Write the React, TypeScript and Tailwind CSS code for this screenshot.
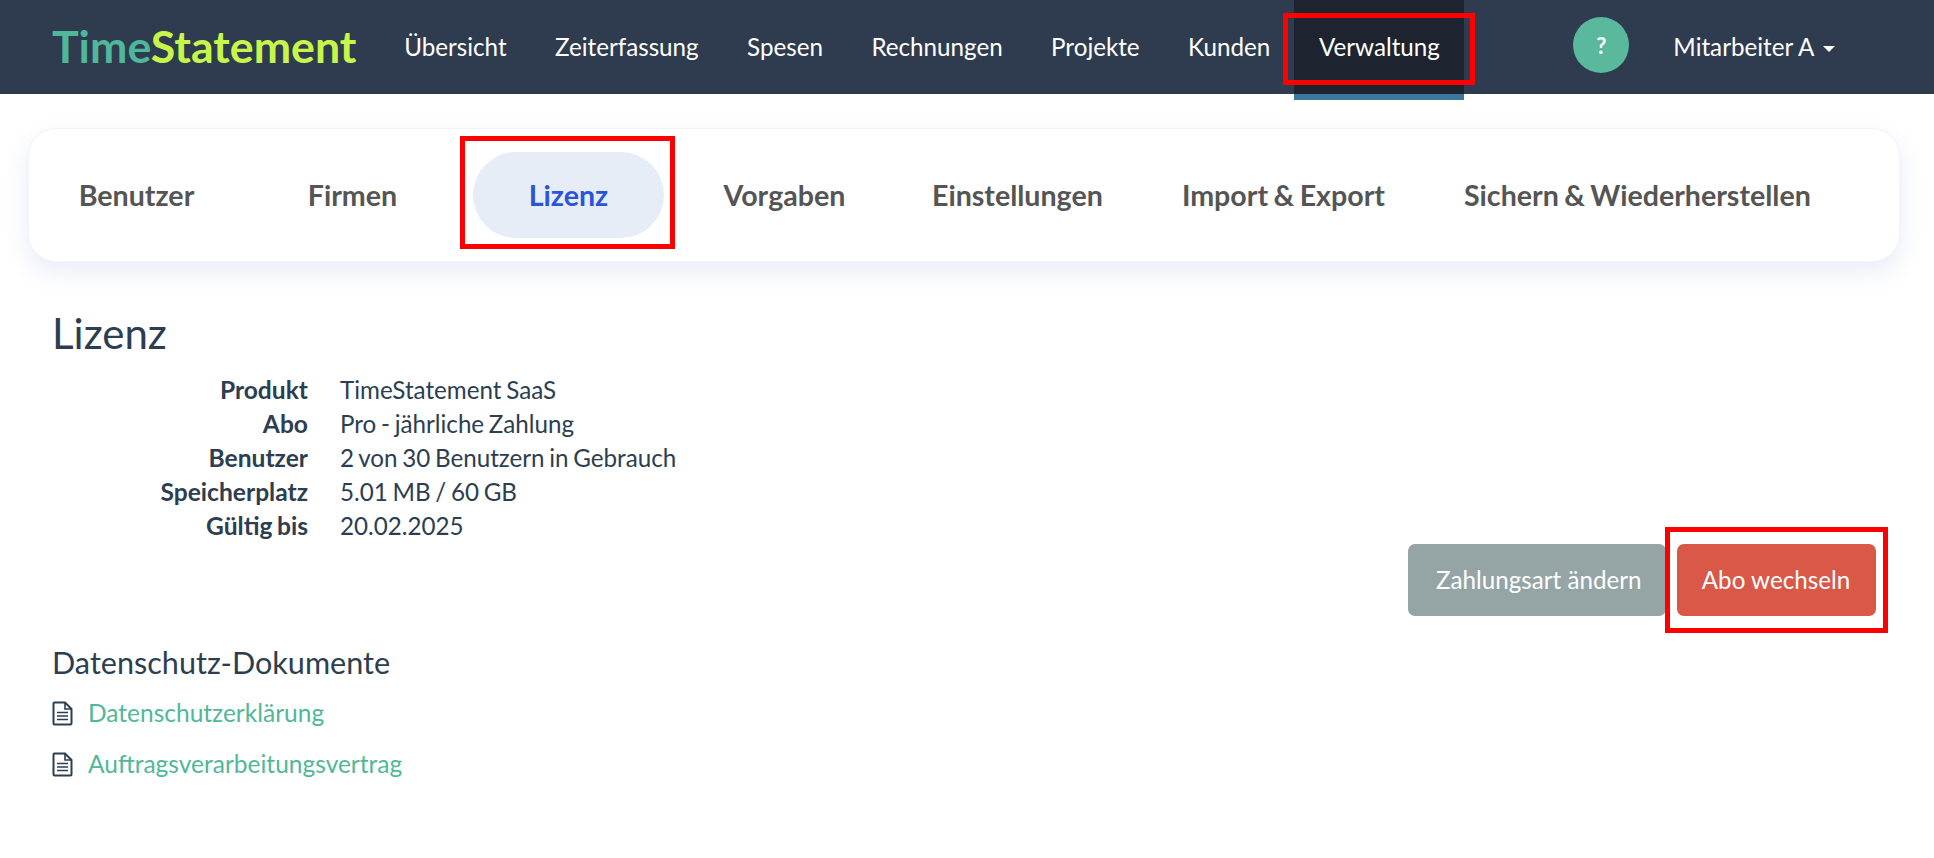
const lato = "font-['Lato','Liberation_Sans',sans-serif]";

function RedBox({ className }: { className: string }) {
  return <div className={`absolute border-[5px] border-[#ff0000] pointer-events-none ${className}`} />;
}

function DocIcon() {
  return (
    <svg width="21" height="25" viewBox="0 0 21 25" fill="none" stroke="#2c3e50" className="shrink-0">
      <path d="M1.5 2.5a1 1 0 0 1 1-1H13L19.5 8v14.5a1 1 0 0 1-1 1h-16a1 1 0 0 1-1-1z" strokeWidth="2" />
      <path d="M13 1.5V8h6.5" strokeWidth="1.6" />
      <path d="M5 11.5h11M5 15h11M5 18.5h11" strokeWidth="1.6" />
    </svg>
  );
}

const navItems = ["Übersicht", "Zeiterfassung", "Spesen", "Rechnungen", "Projekte", "Kunden"];
const tabs = ["Benutzer", "Firmen", "Lizenz", "Vorgaben", "Einstellungen", "Import & Export", "Sichern & Wiederherstellen"];
const rows: [string, string][] = [
  ["Produkt", "TimeStatement SaaS"],
  ["Abo", "Pro - jährliche Zahlung"],
  ["Benutzer", "2 von 30 Benutzern in Gebrauch"],
  ["Speicherplatz", "5.01 MB / 60 GB"],
  ["Gültig bis", "20.02.2025"],
];

export default function App() {
  return (
    <div className={`min-h-[858px] bg-white text-[#2c3e50] text-[24.2px] [word-spacing:-1.5px] ${lato}`}>
      <header className="flex h-[94px] items-start bg-[#2f3c4f] text-white">
        <div className="ml-[52px] mt-[19px] w-[328px] text-[44.7px] font-bold leading-[54px]">
          <span className="text-[#4fb79a]">Time</span>
          <span className="text-[#c8f54a]">Statement</span>
        </div>
        <nav className="flex items-start">
          {navItems.map((n) => (
            <a key={n} className="flex h-[94px] items-center px-[24.2px]">{n}</a>
          ))}
          <a className="relative flex h-[100px] items-center border-b-[6px] border-[#3a789e] bg-[#1d242f] px-[24.5px]">
            Verwaltung
            <RedBox className="-left-[11px] -right-[11px] top-[13px] h-[72px]" />
          </a>
        </nav>
        <div className="ml-[109px] mt-[17px] flex h-[56px] w-[56px] items-center justify-center rounded-full bg-[#5ab89c] text-[22px] font-bold">?</div>
        <div className="ml-[44px] flex h-[94px] items-center [word-spacing:0px]">
          Mitarbeiter A
          <span className="ml-[8px] mt-[3px] border-x-[6px] border-t-[6px] border-x-transparent border-t-white" />
        </div>
      </header>

      <div className="ml-[28px] mr-[34px] mt-[34px] flex h-[134px] items-center gap-[25px] rounded-[28px] border border-[#f1f4fb] bg-white px-[12px] shadow-[0_10px_24px_rgba(70,100,200,0.12)]">
        {tabs.map((t) => (
          <div
            key={t}
            className={
              t === "Lizenz"
                ? "relative flex h-[86px] min-w-[191px] items-center justify-center rounded-[43px] bg-[#e7edf7] px-[27px] text-[28.6px] font-bold text-[#2b55d9]"
                : "flex h-[86px] min-w-[191px] items-center justify-center px-[27px] text-[28.6px] font-bold text-[#555555]"
            }
          >
            {t}
            {t === "Lizenz" && <RedBox className="-left-[13px] -right-[11px] -top-[16px] -bottom-[11px]" />}
          </div>
        ))}
      </div>

      <main className="pl-[52px] pr-[58.5px]">
        <h1 className="mt-[46px] text-[42px] font-normal leading-[50px]">Lizenz</h1>
        <dl className="mt-[15px]">
          {rows.map(([k, v]) => (
            <div key={k} className="flex h-[34px] items-center">
              <dt className="w-[256px] text-right text-[24.6px] font-bold">{k}</dt>
              <dd className="ml-[32px]">{v}</dd>
            </div>
          ))}
        </dl>
        <div className="mt-[1px] flex justify-end gap-[11px]">
          <button className="flex h-[72px] w-[257.5px] items-center justify-center rounded-[7px] bg-[#95a5a6] pl-[4px] text-white">Zahlungsart ändern</button>
          <div className="relative">
            <button className="flex h-[72px] w-[199px] items-center justify-center rounded-[7px] bg-[#d95847] text-white">Abo wechseln</button>
            <RedBox className="-left-[12px] -right-[12px] -top-[17px] -bottom-[17px]" />
          </div>
        </div>
        <h2 className="mt-[29px] text-[30.6px] font-normal leading-[36px]">Datenschutz-Dokumente</h2>
        <ul className="mt-[16px] flex flex-col gap-[19px] text-[24.5px]">
          {["Datenschutzerklärung", "Auftragsverarbeitungsvertrag"].map((l) => (
            <li key={l} className="flex h-[32px] items-center gap-[15px] text-[#4fb898]">
              <DocIcon />
              <a>{l}</a>
            </li>
          ))}
        </ul>
      </main>
    </div>
  );
}
